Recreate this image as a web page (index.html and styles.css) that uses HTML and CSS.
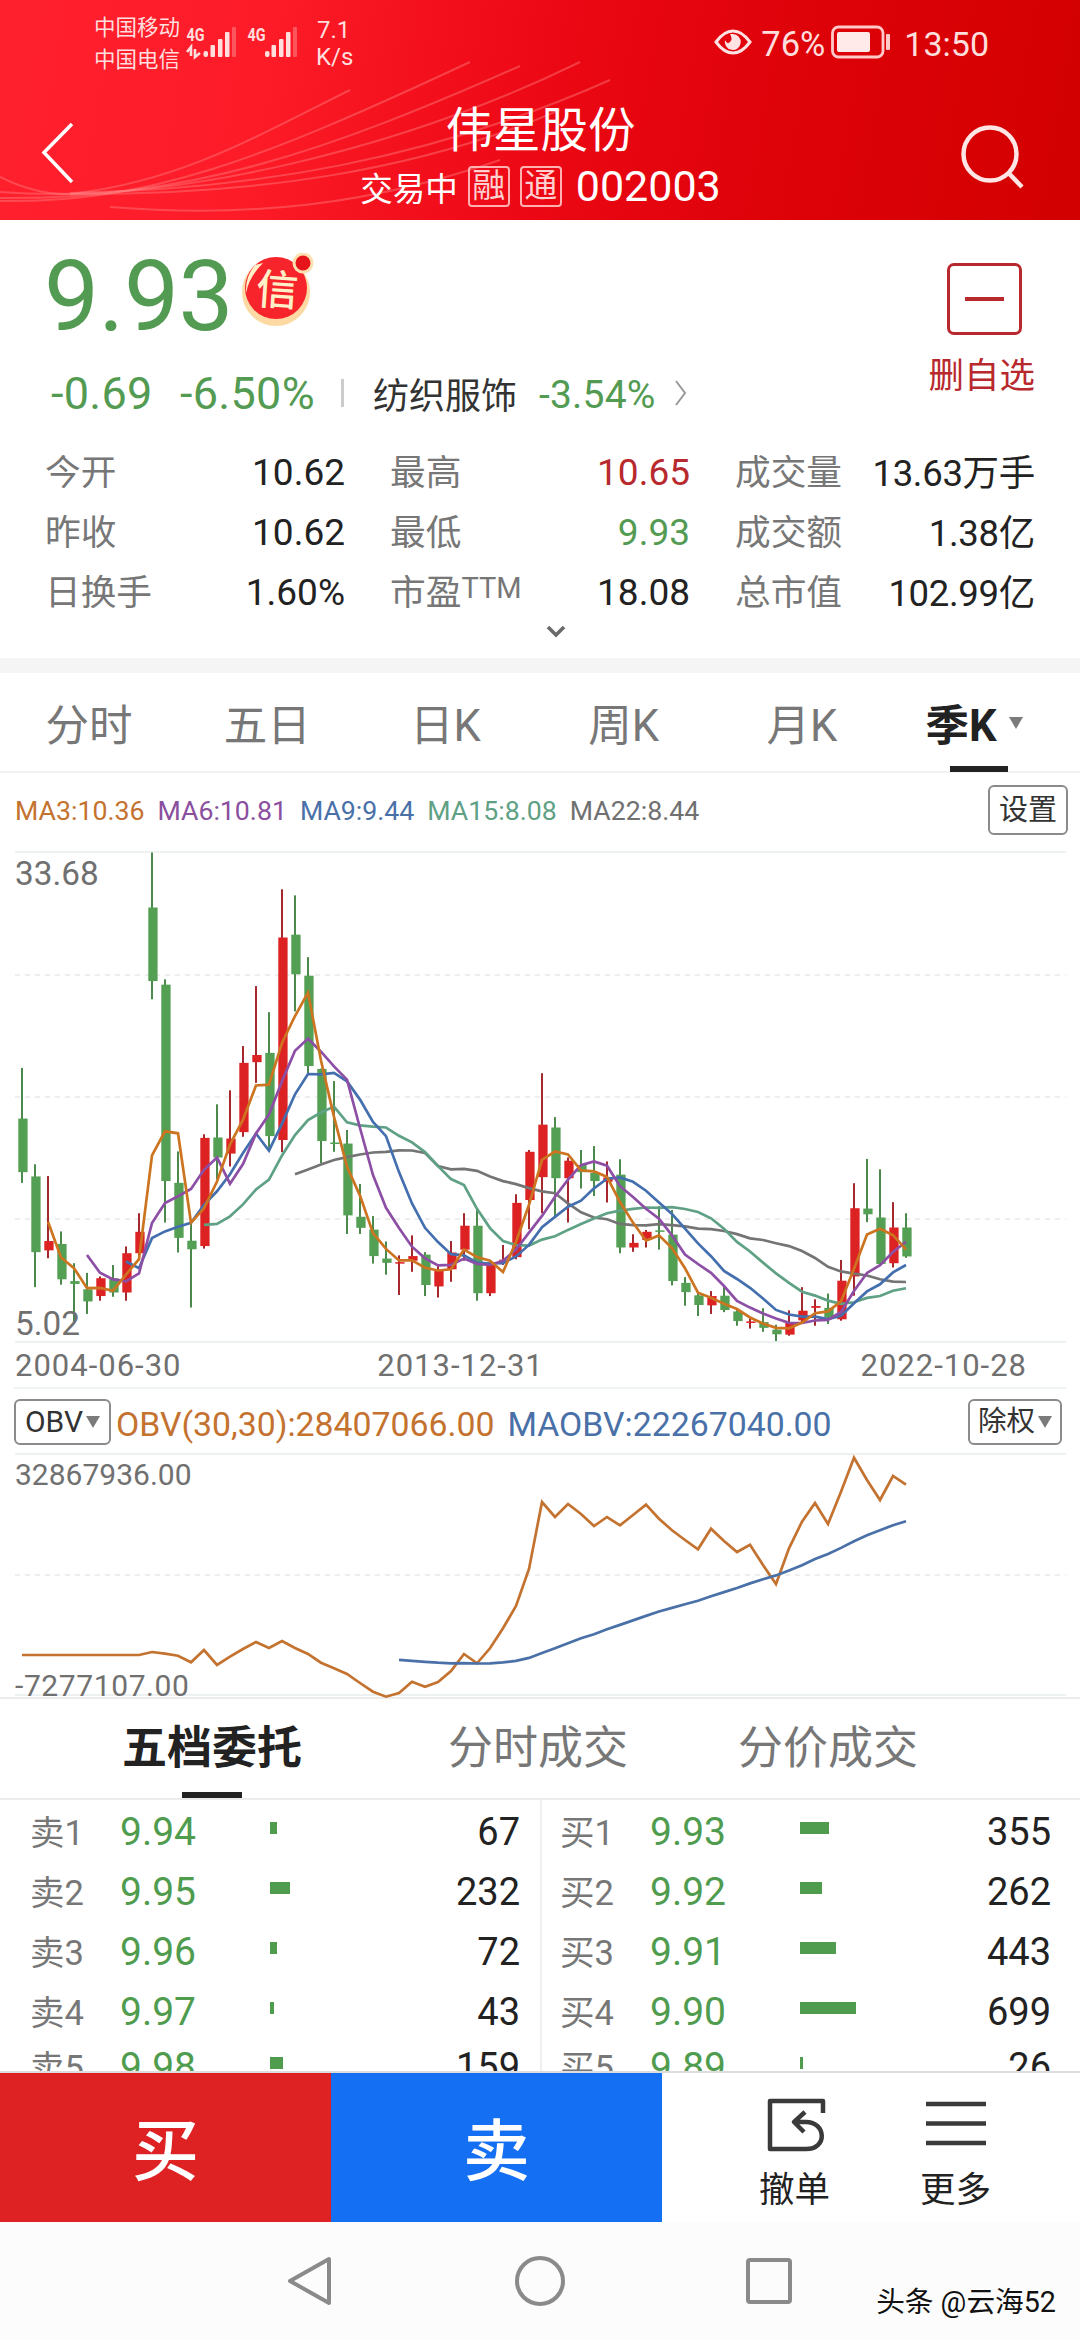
FILE: index.html
```
<!DOCTYPE html>
<html lang="zh-CN">
<head>
<meta charset="utf-8">
<title>伟星股份 002003</title>
<link rel="stylesheet" href="styles.css">
</head>

<body>
  <div class="header">
    <svg class="swirl" width="1080" height="220" viewBox="0 0 1080 220">
      <path d="M0 177 C30 192 55 196 78 193 C180 180 250 140 350 90"/>
      <path d="M0 201 C150 203 260 160 470 62"/>
      <path d="M0 198 C190 200 330 150 520 66"/>
      <path d="M0 192 C170 205 400 150 580 62"/>
      <path d="M70 193 C250 190 430 160 610 80"/>
      <path d="M70 194 C260 195 420 170 560 110"/>
      <path d="M110 207 C250 218 370 205 500 160"/>
    </svg>
    <div class="status-bar">
      <div class="carriers">
        <span>中国移动</span>
        <span>中国电信</span>
      </div>
      <svg class="signal" width="120" height="40" viewBox="184 22 120 40">
        <text x="186.500" y="41" textLength="18" lengthAdjust="spacingAndGlyphs">4G</text>
        <path d="M187 52 L191 47 V56 M195 49 V57 L200 53" fill="none" stroke="#ffdede" stroke-width="2.600"/>
        <rect x="203.500" y="51" width="4.500" height="6" rx="2"/>
        <rect x="210.500" y="45" width="4.500" height="12" rx="1"/>
        <rect x="218" y="39" width="4.500" height="18" rx="1"/>
        <rect x="225" y="32" width="4.500" height="25" rx="1"/>
        <rect x="232" y="27" width="4" height="30" rx="1" opacity=".3"/>
        <text x="247.500" y="41" textLength="18" lengthAdjust="spacingAndGlyphs">4G</text>
        <rect x="265" y="51" width="4.500" height="6" rx="2"/>
        <rect x="271.500" y="45" width="4.500" height="12" rx="1"/>
        <rect x="279" y="39" width="4.500" height="18" rx="1"/>
        <rect x="286" y="32" width="4.500" height="25" rx="1"/>
        <rect x="293" y="27" width="4" height="30" rx="1" opacity=".3"/>
      </svg>
      <div class="speed">
        <span>7.1</span>
        <span>K/s</span>
      </div>
      <div class="status-right">
        <svg width="40" height="28" viewBox="0 0 40 28">
          <path d="M3 14 Q11 3 20 3 Q29 3 37 14 Q29 25 20 25 Q11 25 3 14 Z" fill="none" stroke="#ffe3e3" stroke-width="3"/>
          <path d="M20 6 A8 8 0 1 1 12 12 Q14 17 17 14 Q20 11 17 6 Z" fill="#ffe3e3"/>
        </svg>
        <span class="battery-text">76%</span>
        <svg width="60" height="34" viewBox="0 0 60 34">
          <rect x="1.500" y="2" width="50.500" height="30" rx="6" fill="none" stroke="#ffc9c9" stroke-width="2.800"/>
          <rect x="6" y="7" width="33" height="20" rx="2" fill="#ffe9e9"/>
          <rect x="55" y="9" width="4" height="16" rx="1" fill="#ffc9c9"/>
        </svg>
        <span class="clock">13:50</span>
      </div>
    </div>
    <div class="title-bar">
      <svg class="back" width="36" height="64" viewBox="0 0 36 64"><path d="M32 3 L4 31.500 L32 61"/></svg>
      <div class="title">
        <h1>伟星股份</h1>
        <div class="subtitle">
          <span>交易中</span>
          <span class="tag">融</span>
          <span class="tag">通</span>
          <span class="code">002003</span>
        </div>
      </div>
      <svg class="search" width="68" height="70" viewBox="0 0 68 70"><circle cx="30" cy="30" r="26.500"/><path d="M47.500 48 L62 63"/></svg>
    </div>
  </div>

  <div class="quote">
    <div class="price-row">
      <span class="price">9.93</span>
      <svg class="badge" width="76" height="76" viewBox="0 0 76 76">
        <circle cx="35" cy="39" r="34" fill="#fdd9a4"/>
        <circle cx="35" cy="35" r="31" fill="#f8242c"/>
        <path d="M14 12 Q4 24 5 40 Q8 24 22 10 Z" fill="#fff0c8"/>
        <circle cx="62" cy="10" r="10.500" fill="#fde0b0"/>
        <circle cx="62" cy="10" r="7.500" fill="#e8141c"/>
        <text x="36" y="52" text-anchor="middle" transform="rotate(4 36 40)">信</text>
      </svg>
      <div class="remove">
        <div class="remove-box"><i></i></div>
        <span>删自选</span>
      </div>
    </div>
    <div class="change-row">
      <span class="chg">-0.69</span>
      <span class="chg pct">-6.50%</span>
      <i class="bar-sep"></i>
      <span class="sector">纺织服饰</span>
      <span class="sector-chg">-3.54%</span>
      <svg width="14" height="30" viewBox="0 0 14 30"><path d="M2 3 L11 15 L2 27" fill="none" stroke="#999" stroke-width="2"/></svg>
    </div>
    <div class="stats">
      <div class="stat"><label>今开</label><b>10.62</b></div>
      <div class="stat"><label>最高</label><b class="red">10.65</b></div>
      <div class="stat"><label>成交量</label><b class="unit">13.63万手</b></div>
      <div class="stat"><label>昨收</label><b>10.62</b></div>
      <div class="stat"><label>最低</label><b class="green">9.93</b></div>
      <div class="stat"><label>成交额</label><b class="unit">1.38亿</b></div>
      <div class="stat"><label>日换手</label><b>1.60%</b></div>
      <div class="stat"><label>市盈<span class="ttm">TTM</span></label><b>18.08</b></div>
      <div class="stat"><label>总市值</label><b class="unit">102.99亿</b></div>
    </div>
    <svg class="expand" width="22" height="16" viewBox="0 0 22 16"><path d="M3 4 L11 12 L19 4" fill="none" stroke="#6a6a6a" stroke-width="3.600"/></svg>
  </div>

  <div class="period-tabs">
    <span>分时</span>
    <span>五日</span>
    <span>日K</span>
    <span>周K</span>
    <span>月K</span>
    <span class="active">季K<i class="tri"></i></span>
  </div>

  <div class="ma-row">
    <span class="c-ma3">MA3:10.36</span>
    <span class="c-ma6">MA6:10.81</span>
    <span class="c-ma9">MA9:9.44</span>
    <span class="c-ma15">MA15:8.08</span>
    <span class="c-ma22">MA22:8.44</span>
    <span class="small-btn">设置</span>
  </div>

  <div class="chart k-chart">
    <svg id="kline" width="1080" height="504" viewBox="0 0 1080 504"></svg>
    <span class="axis-top">33.68</span>
    <span class="axis-bottom">5.02</span>
  </div>
  <div class="dates">
    <span>2004-06-30</span>
    <span>2013-12-31</span>
    <span>2022-10-28</span>
  </div>

  <div class="obv-row">
    <span class="small-btn">OBV<i class="tri"></i></span>
    <span class="c-ma3 obv">OBV(30,30):28407066.00</span>
    <span class="c-ma9 maobv">MAOBV:22267040.00</span>
    <span class="small-btn right">除权<i class="tri"></i></span>
  </div>
  <div class="chart obv-chart">
    <svg id="obv" width="1080" height="246" viewBox="0 0 1080 246"></svg>
    <span class="axis-top">32867936.00</span>
    <span class="axis-bottom">-7277107.00</span>
  </div>

  <div class="order-tabs">
    <span class="active">五档委托</span>
    <span>分时成交</span>
    <span>分价成交</span>
  </div>
  <div class="orders">
    <div class="side" id="sell"></div>
    <div class="side" id="buy"></div>
  </div>

  <div class="actions">
    <div class="buy-btn">买</div>
    <div class="sell-btn">卖</div>
    <div class="action cancel">
      <svg width="62" height="58" viewBox="0 0 62 58"><path d="M58 16 V4 H5 V52 H41 C63 52 61 25 41 25 H30 M40 15 L29 25 L39 35"/></svg>
      <span>撤单</span>
    </div>
    <div class="action more">
      <svg width="62" height="58" viewBox="0 0 62 58"><path d="M1 7 H61 M1 26.500 H61 M1 46 H61"/></svg>
      <span>更多</span>
    </div>
  </div>

  <div class="nav-bar">
    <svg width="50" height="54" viewBox="0 0 50 54"><path d="M44 5 V49 L5 27 Z"/></svg>
    <svg width="54" height="54" viewBox="0 0 54 54"><circle cx="27" cy="27" r="23"/></svg>
    <svg width="50" height="54" viewBox="0 0 50 54"><rect x="5" y="6" width="42" height="42" rx="2"/></svg>
    <span class="watermark">头条 @云海52</span>
  </div>

<script src="chart.js"></script>
</body>
</html>
```
FILE: styles.css
```
body {
  background-color: #fff;
  color: #222;
  font-family: Roboto, "Noto Sans CJK SC", sans-serif;
  height: 2340px;
  margin: 0;
  overflow: hidden;
  width: 1080px;
}
* {
  box-sizing: border-box;
}
svg {
  display: block;
  flex: none;
}
span, label, b {
  white-space: nowrap;
}

/* header */
.header {
  background: linear-gradient(100deg, #ff202e 0%, #fd1b28 25%, #ec0814 50%, #de0209 72%, #d20000 100%);
  color: #fff;
  height: 220px;
  position: relative;
}
.swirl {
  fill: none;
  left: 0;
  position: absolute;
  stroke: #ff8a8a;
  stroke-opacity: .4;
  stroke-width: 2;
  top: 0;
}
.status-bar {
  color: #ffdede;
  display: flex;
  height: 88px;
  padding-left: 94px;
  position: relative;
}
.carriers {
  display: flex;
  flex-flow: column;
  font-size: 21.5px;
  line-height: 32px;
  padding-top: 12px;
  width: 90px;
}
.signal {
  fill: #ffdede;
  font-size: 19px;
  font-weight: bold;
  margin-top: 22px;
}
.speed {
  display: flex;
  flex-flow: column;
  font-size: 24px;
  line-height: 27px;
  margin-left: 12px;
  padding-top: 17px;
}
.speed span:first-child {
  padding-left: 1px;
}
.status-right {
  align-items: center;
  display: flex;
  height: 84px;
  margin-left: auto;
  padding-right: 91px;
}
.battery-text {
  font-size: 34.5px;
  margin: 3px 6px 0 8px;
}
.clock {
  font-size: 34px;
  margin: 3px 0 0 13px;
}
.title-bar {
  display: flex;
  height: 132px;
  position: relative;
}
.back {
  fill: none;
  margin: 33px 0 0 40px;
  stroke: #fff;
  stroke-width: 3.5;
}
.title {
  align-items: center;
  display: flex;
  flex: 1;
  flex-flow: column;
}
.title h1 {
  font-size: 47.5px;
  font-weight: normal;
  line-height: 60px;
  margin: 13px 0 0 45px;
}
.subtitle {
  align-items: center;
  display: flex;
  font-size: 32.5px;
  height: 44px;
  margin: 3px 0 0 45px;
}
.tag {
  border: 2px solid #ffb0b0;
  border-radius: 4px;
  color: #ffd0d0;
  font-size: 33px;
  height: 41px;
  line-height: 35px;
  margin-left: 10px;
  text-align: center;
  width: 42px;
}
.code {
  font-size: 43px;
  margin-left: 14px;
}
.search {
  fill: none;
  margin: 36px 52px 0 0;
  stroke: #ffe6e6;
  stroke-width: 4.5;
}

/* quote */
.quote {
  border-bottom: 15px solid #f5f5f5;
  height: 453px;
  padding: 0 46px;
}
.price-row {
  display: flex;
  height: 139px;
}
.price {
  color: #539b52;
  font-size: 98px;
  letter-spacing: -.5px;
  line-height: 154px;
  margin-left: -2px;
}
.badge {
  fill: #fff0c8;
  font-family: "Noto Sans CJK SC";
  font-size: 42px;
  font-weight: 500;
  margin: 33px 0 0 8px;
}
.remove {
  align-items: flex-end;
  color: #b8292e;
  display: flex;
  flex-flow: column;
  font-size: 35.5px;
  height: 170px;
  line-height: 50px;
  margin: 0 -1px 0 auto;
  padding-top: 43px;
}
.remove-box {
  align-items: center;
  border: 3px solid #b8292e;
  border-radius: 7px;
  display: flex;
  flex: none;
  height: 72px;
  justify-content: center;
  margin: 0 13px 16px 0;
  width: 75px;
}
.remove-box i {
  background-color: #b8292e;
  height: 4px;
  width: 39px;
}
.change-row {
  align-items: center;
  display: flex;
  height: 68px;
  padding-left: 5px;
}
.chg {
  color: #539b52;
  font-size: 45px;
  letter-spacing: .3px;
  width: 129px;
}
.pct {
  width: auto;
}
.bar-sep {
  background-color: #ccc;
  height: 28px;
  margin-left: 26px;
  width: 3px;
}
.sector {
  color: #333;
  font-size: 36px;
  margin-left: 29px;
}
.sector-chg {
  color: #539b52;
  font-size: 39px;
  letter-spacing: .2px;
  margin: 4px 18px 0 22px;
}
.stats {
  column-gap: 47px;
  display: grid;
  grid-template-columns: 298px 298px 298px;
  grid-template-rows: 60px 60px 60px;
  margin-top: 15px;
}
.stat {
  align-items: center;
  display: flex;
  justify-content: space-between;
}
.stat label {
  color: #777;
  font-size: 35.7px;
  margin: -5px 0 0 -1px;
}
.stat b {
  font-size: 37px;
  font-weight: normal;
  margin-right: -1px;
}
.stat .unit {
  font-size: 36.5px;
  letter-spacing: -.3px;
  margin-top: -4px;
}
.stat .red {
  color: #b8292e;
}
.stat .green {
  color: #539b52;
}
.ttm {
  font-size: 29px;
  position: relative;
  top: -7px;
}
.expand {
  margin: 0 auto;
  position: relative;
  left: 16px;
  top: 1px;
}

/* period tabs */
.period-tabs {
  border-bottom: 2px solid #f2f2f2;
  color: #777;
  display: grid;
  font-size: 43.5px;
  grid-template-columns: repeat(6, 178.2px);
  height: 100px;
  line-height: 107px;
  text-align: center;
}
.period-tabs .active {
  color: #222;
  font-weight: bold;
  position: relative;
}
.period-tabs .active::after {
  background-color: #222;
  bottom: 8px;
  content: "";
  height: 6px;
  left: 59px;
  position: absolute;
  width: 58px;
}
.tri {
  border: 7px solid transparent;
  border-bottom: 0;
  border-top: 12px solid #7b7b7b;
  display: inline-block;
}
.period-tabs .tri {
  margin: 0 12px 12px 12px;
}

/* MA legend */
.ma-row {
  align-items: center;
  display: flex;
  font-size: 26.7px;
  gap: 13px;
  height: 67px;
  padding: 9px 12px 0 15px;
}
.c-ma3 {
  color: #c4722f;
}
.c-ma6 {
  color: #8a4f9e;
}
.c-ma9 {
  color: #4a70a8;
}
.c-ma15 {
  color: #5fa184;
}
.c-ma22 {
  color: #707070;
}
.small-btn {
  align-items: center;
  border: 2px solid #8b8b8b;
  border-radius: 6px;
  color: #333;
  display: flex;
  font-size: 29px;
  height: 50px;
  justify-content: center;
  line-height: 42px;
  margin-left: auto;
  width: 80px;
}
.ma-row .small-btn {
  margin-top: -3px;
}

/* charts */
.chart {
  position: relative;
}
.chart span {
  color: #707070;
  left: 15px;
  position: absolute;
}
.k-chart {
  height: 504px;
}
.k-chart span {
  font-size: 33.3px;
  line-height: 40px;
}
.k-chart .axis-top {
  top: 14px;
}
.k-chart .axis-bottom {
  bottom: 0;
}
.dates {
  border-bottom: 2px solid #f1f4f4;
  color: #707070;
  display: flex;
  font-size: 31px;
  height: 45px;
  justify-content: space-between;
  letter-spacing: 1px;
  line-height: 43px;
  margin: 0 14px;
  padding: 0 39px 0 1px;
}
.dates span:nth-child(2) {
  margin-right: 121px;
}
.obv-row {
  align-items: center;
  display: flex;
  height: 64px;
  padding: 0 18px 0 14px;
}
.obv-row .small-btn {
  font-size: 30px;
  gap: 3px;
  height: 46px;
  margin: 2px 0 0;
  width: 97px;
}
.obv-row .right {
  font-size: 28.5px;
  margin-left: auto;
  width: 94px;
}
.obv {
  font-size: 33.8px;
  margin: 6px 0 0 5px;
}
.maobv {
  font-size: 33.8px;
  margin: 6px 0 0 13px;
}
.obv-chart {
  border-bottom: 2px solid #ececec;
  height: 246px;
}
.obv-chart span {
  font-size: 30px;
  line-height: 30px;
}
.obv-chart .axis-top {
  top: 7px;
}
.obv-chart .axis-bottom {
  bottom: -4px;
  letter-spacing: .6px;
}

/* order book */
.order-tabs {
  border-bottom: 2px solid #ececec;
  color: #777;
  display: flex;
  font-size: 45px;
  height: 101px;
  line-height: 99px;
  padding-left: 122px;
}
.order-tabs span {
  margin-right: 110px;
}
.order-tabs .active {
  color: #222;
  font-weight: bold;
  margin-right: 146px;
  position: relative;
}
.order-tabs .active::after {
  background-color: #222;
  bottom: 0;
  content: "";
  height: 6px;
  left: 60px;
  position: absolute;
  width: 60px;
}
.orders {
  border-bottom: 2px solid #ddd;
  display: flex;
  height: 273px;
  overflow: hidden;
}
.side {
  padding: 2px 20px 0 30px;
  width: 540px;
}
#buy {
  border-left: 2px solid #f0f0f0;
  padding: 2px 29px 0 18px;
}
.order {
  align-items: center;
  display: flex;
  height: 60px;
}
.order:last-child {
  height: 50px;
}
.order label {
  color: #777;
  font-size: 34.5px;
  margin-top: -5px;
  width: 90px;
}
.order .p {
  color: #4f9c4f;
  font-size: 39px;
  width: 150px;
}
.order .vol {
  background-color: #4f9c4f;
  height: 12px;
  margin-top: -8px;
}
.order .n {
  font-size: 38px;
  margin-left: auto;
}

/* bottom */
.actions {
  display: flex;
  height: 149px;
}
.buy-btn, .sell-btn {
  background-color: #de2223;
  color: #fff;
  font-size: 67px;
  font-weight: 500;
  line-height: 158px;
  height: 149px;
  text-align: center;
  width: 331px;
}
.sell-btn {
  background-color: #146ff2;
}
.action {
  align-items: center;
  display: flex;
  flex-flow: column;
  font-size: 35.5px;
  line-height: 40px;
  margin-left: 97px;
  padding-top: 24px;
}
.action svg {
  fill: none;
  stroke: #3a3a3a;
  stroke-linejoin: round;
  stroke-width: 4.5;
}
.cancel svg {
  margin-left: 3px;
}
.action span {
  margin-top: 15px;
}
.more {
  margin-left: 90px;
}
.nav-bar {
  background-color: #fcfcfc;
  display: flex;
  height: 118px;
  padding: 32px 0 0 285px;
  position: relative;
}
.nav-bar svg {
  fill: none;
  margin-right: 178px;
  stroke: #8a8a8a;
  stroke-linejoin: round;
  stroke-width: 4;
}
.nav-bar svg:nth-child(2) {
  margin-right: 176px;
}
.watermark {
  bottom: 18px;
  color: #111;
  font-size: 28.7px;
  line-height: 40px;
  position: absolute;
  right: 24px;
  text-shadow: 1px 1px 0 #fff, -1px -1px 0 #fff;
}
```
FILE: chart.js
```
// one candle per quarter: [colour, high, body top, body bottom, low]
const candles = [
  ['g',638,780,930,960], ['g',908,942,1154,1252], ['r',941,1123,1149,1171], ['g',1096,1131,1230,1245],
  ['g',1185,1235,1243,1350], ['g',1212,1258,1292,1327], ['r',1222,1227,1277,1290], ['g',1190,1227,1267,1279],
  ['r',1138,1157,1267,1290], ['r',1045,1097,1157,1165], ['g',35,189,395,446], ['g',390,405,955,1071],
  ['g',872,960,1114,1155], ['g',1068,1122,1146,1309], ['r',824,834,1137,1144], ['g',740,833,889,950],
  ['r',701,836,878,914], ['r',577,624,818,831], ['r',409,602,622,680], ['g',482,596,829,862],
  ['r',138,273,840,874], ['g',155,265,376,480], ['g',328,380,633,655], ['g',640,641,843,905],
  ['g',675,847,850,873], ['g',812,850,1051,1103], ['g',963,1055,1086,1103], ['g',1053,1091,1165,1186],
  ['g',1124,1172,1184,1217], ['r',1163,1182,1186,1274], ['r',1107,1165,1178,1209], ['g',1154,1161,1246,1277],
  ['r',1188,1205,1250,1281], ['r',1123,1155,1202,1237], ['r',1045,1080,1147,1178], ['g',1035,1080,1269,1290],
  ['r',1180,1185,1269,1277], ['r',1134,1175,1180,1190], ['r',992,1016,1168,1174], ['r',868,873,1008,1090],
  ['r',653,797,944,1045], ['g',776,805,947,1057], ['r',889,898,947,1071], ['g',868,910,930,976],
  ['g',857,932,955,997], ['r',900,945,957,1015], ['g',894,937,1141,1157], ['r',1104,1128,1141,1153],
  ['r',1092,1097,1120,1141], ['g',1025,1093,1096,1147], ['g',1036,1105,1235,1247], ['g',1224,1240,1266,1304],
  ['g',1270,1275,1302,1333], ['r',1263,1277,1303,1327], ['g',1252,1276,1316,1322], ['g',1315,1320,1347,1360],
  ['r',1340,1348,1351,1368], ['g',1311,1350,1366,1377], ['g',1357,1371,1384,1403], ['r',1317,1352,1385,1388],
  ['r',1252,1318,1345,1352], ['r',1286,1305,1310,1360], ['g',1270,1310,1337,1355], ['r',1176,1234,1342,1346],
  ['r',961,1031,1222,1276], ['g',893,1032,1048,1070], ['g',922,1057,1187,1190], ['r',1014,1085,1185,1197],
  ['g',1045,1085,1166,1170]
];
const obv = [
  825,825,825,825,825,825,825,825,825,825,816,821,827,847,810,855,830,807,786,804,783,804,822,848,865,
  882,909,935,950,939,905,920,906,873,822,850,805,745,678,567,366,411,372,402,438,411,436,405,374,416,
  451,480,508,446,483,516,494,555,612,505,425,369,432,335,233,300,360,288,314
];

const x = i => 22 + 13 * i;

function average(values, n) {
  return values.map((v, i) => i < n - 1 ? null : values.slice(i - n + 1, i + 1).reduce((a, b) => a + b) / n);
}

function line(values, y, color) {
  const pts = values.map((v, i) => v === null ? '' : x(i) + ',' + y(v).toFixed(1)).join(' ');
  return `<polyline points="${pts}" fill="none" stroke="${color}" stroke-width="2.7"/>`;
}

function grid(solid, dashed) {
  return solid.map(y => `<path d="M15 ${y} H1066" stroke="#eef1f1" stroke-width="2"/>`).join('') +
    dashed.map(y => `<path d="M15 ${y} H1066" stroke="#eeeeee" stroke-width="2" stroke-dasharray="5 5"/>`).join('');
}

function drawKline() {
  const y = v => v / 2.8;
  let out = grid([12, 502], [135, 257, 379]);
  candles.forEach(([c, high, top, bottom, low], i) => {
    const h = Math.max(y(bottom - top), 1.5);
    out += `<rect x="${x(i) - 1}" y="${y(high)}" width="2" height="${y(low - high)}" fill="${c == 'g' ? '#4b8a4c' : '#a5282f'}"/>`;
    out += `<rect x="${x(i) - 3.7}" y="${y(top)}" width="9.3" height="${h}" fill="${c == 'g' ? '#539f53' : '#dd2224'}"/>`;
  });
  const close = candles.map(k => k[0] == 'g' ? k[3] : k[2]);
  out += line(average(close, 22), y, '#747474');
  out += line(average(close, 15), y, '#5fa184');
  out += line(average(close, 9), y, '#446fae');
  out += line(average(close, 6), y, '#8d4fa5');
  out += line(average(close, 3), y, '#cc7420');
  document.getElementById('kline').innerHTML = out;
}

function drawObv() {
  const y = v => v / 3 - 73;
  document.getElementById('obv').innerHTML = grid([1, 242], [122]) +
    line(obv, y, '#c4722f') + line(average(obv, 30), y, '#4a70a8');
}

function drawOrders(id, name, rows) {
  document.getElementById(id).innerHTML = rows.map(([price, width, count], i) =>
    `<div class="order"><label>${name}${i + 1}</label><span class="p">${price}</span>` +
    `<i class="vol" style="width:${width}px"></i><span class="n">${count}</span></div>`).join('');
}

drawKline();
drawObv();
drawOrders('sell', '卖', [['9.94',6.5,67], ['9.95',19.5,232], ['9.96',6.5,72], ['9.97',4,43], ['9.98',13,159]]);
drawOrders('buy', '买', [['9.93',29,355], ['9.92',21.5,262], ['9.91',36,443], ['9.90',56,699], ['9.89',2.5,26]]);
```
